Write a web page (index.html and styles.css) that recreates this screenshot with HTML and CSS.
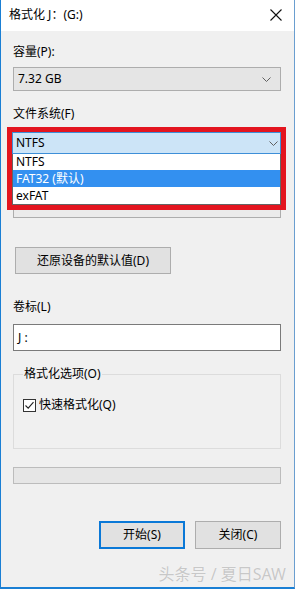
FILE: index.html
```html
<!DOCTYPE html>
<html>
<head>
<meta charset="utf-8">
<link rel="stylesheet" href="styles.css">
</head>
<body>
<div class="window">
  <div class="titlebar">
    <span class="title">格式化 J：(G:)</span>
    <svg class="close" width="12" height="12" viewBox="0 0 12 12"><path d="M0.5 0.5 L11.5 11.5 M11.5 0.5 L0.5 11.5" stroke="#111" stroke-width="1.1" fill="none"/></svg>
  </div>
  <div class="content">
    <div class="label l1">容量(P):</div>
    <div class="combo">
      <span>7.32 GB</span>
      <svg class="chev" width="9" height="5" viewBox="0 0 9 5"><path d="M0.5 0.5 L4.5 4.5 L8.5 0.5" stroke="#606060" fill="none"/></svg>
    </div>
    <div class="label l2">文件系统(F)</div>
    <div class="redbox">
      <div class="combo open">
        <span>NTFS</span>
        <svg class="chev" width="9" height="5" viewBox="0 0 9 5"><path d="M0.5 0.5 L4.5 4.5 L8.5 0.5" stroke="#606060" fill="none"/></svg>
      </div>
      <div class="list">
        <div class="opt o1">NTFS</div>
        <div class="opt o2 sel">FAT32 (默认)</div>
        <div class="opt o3">exFAT</div>
      </div>
    </div>
    <div class="hidden-strip"></div>
    <div class="btn reset">还原设备的默认值(D)</div>
    <div class="label l3">卷标(L)</div>
    <div class="input">J :</div>
    <div class="group">
      <div class="legend">格式化选项(O)</div>
      <div class="check-row">
        <svg class="cb" width="13" height="13" viewBox="0 0 13 13"><rect x="0.5" y="0.5" width="12" height="12" fill="#fff" stroke="#333"/><path d="M2.5 6.5 L5.2 9.2 L10.5 3.2" stroke="#222" stroke-width="1.1" fill="none"/></svg>
        <span>快速格式化(Q)</span>
      </div>
    </div>
    <div class="progress"></div>
    <div class="buttons">
      <div class="btn start">开始(S)</div>
      <div class="btn closebtn">关闭(C)</div>
    </div>
  </div>
  <div class="watermark">头条号 / 夏日SAW</div>
</div>
</body>
</html>
```
FILE: styles.css
```css
* { box-sizing: border-box; }
html, body { margin: 0; padding: 0; }
body {
  width: 295px;
  height: 589px;
  overflow: hidden;
  font-family: "Noto Sans", "Noto Sans CJK SC", sans-serif;
  font-size: 12px;
  color: #000;
}
.window {
  position: relative;
  width: 295px;
  height: 589px;
  background: #f0f0f0;
  border-left: 1px solid #1a7fd4;
  border-right: 1px solid #6a9ed0;
  border-bottom: 2px solid #1a7fd4;
}
.titlebar {
  height: 31px;
  background: #fff;
  display: flex;
  align-items: center;
  justify-content: space-between;
  padding: 0 12px 1px 8px;
}
.title { font-size: 12px; line-height: 16px; }
.close { display: block; margin-top: -1px; }
.content {
  display: flex;
  flex-direction: column;
  align-items: stretch;
  padding: 0 13px 0 12px;
}
.label { line-height: 16px; height: 16px; }
.l1 { margin-top: 13px; }
.combo {
  margin-top: 7px;
  height: 24px;
  background: #e5e5e5;
  border: 1px solid #adadad;
  display: flex;
  align-items: center;
  justify-content: space-between;
  padding: 0 9px 0 4px;
}
.combo span { line-height: 16px; }
.chev { display: block; }
.l2 { margin-top: 15px; }
.redbox {
  margin: 5px -5px 0 -6px;
  border: 5px solid #e3151f;
  height: 83px;
  display: flex;
  flex-direction: column;
}
.combo.open {
  margin: 0;
  height: 23px;
  background: #cce4f7;
  border: 1px solid #3d8fd8;
  padding-left: 3px;
  padding-right: 2px;
}
.list {
  background: #fff;
  border: 1px solid #646464;
  border-top: none;
  flex: 1;
  display: flex;
  flex-direction: column;
}
.opt { padding-left: 3px; line-height: 17px; height: 17px; }
.o1 { height: 16px; line-height: 16px; }
.sel { background: #3390f0; color: #fff; }
.hidden-strip {
  height: 8px;
  border-left: 1px solid #adadad;
  border-right: 1px solid #adadad;
  border-bottom: 1px solid #adadad;
  background: #ebebeb;
}
.btn {
  display: flex;
  align-items: center;
  justify-content: center;
  background: #e1e1e1;
  border: 1px solid #adadad;
  line-height: 16px;
}
.reset {
  margin-top: 29px;
  margin-left: 2px;
  width: 156px;
  height: 27px;
}
.l3 { margin-top: 25px; }
.input {
  margin-top: 9px;
  height: 27px;
  background: #fff;
  border: 1px solid #7a7a7a;
  padding-left: 4px;
  display: flex;
  align-items: center;
}
.group {
  margin-top: 23px;
  height: 75px;
  border: 1px solid #dcdcdc;
  padding-left: 9px;
  display: flex;
  flex-direction: column;
  align-items: flex-start;
}
.legend {
  margin-top: -9px;
  background: #f0f0f0;
  padding: 0 1px;
  line-height: 16px;
  height: 16px;
}
.check-row {
  margin-top: 15px;
  display: flex;
  align-items: center;
  gap: 3px;
  line-height: 16px;
}
.cb { display: block; }
.progress {
  margin-top: 18px;
  height: 17px;
  background: #e6e6e6;
  border: 1px solid #bcbcbc;
}
.buttons {
  margin-top: 37px;
  display: flex;
  justify-content: flex-end;
  gap: 10px;
}
.start, .closebtn { width: 86px; height: 28px; }
.start { border: 2px solid #0a78d7; }
.watermark {
  position: absolute;
  right: 8px;
  bottom: 3px;
  font-size: 16px;
  line-height: 19px;
  color: #c8c8c8;
  text-shadow: 0 0 1px #fff;
}
```
